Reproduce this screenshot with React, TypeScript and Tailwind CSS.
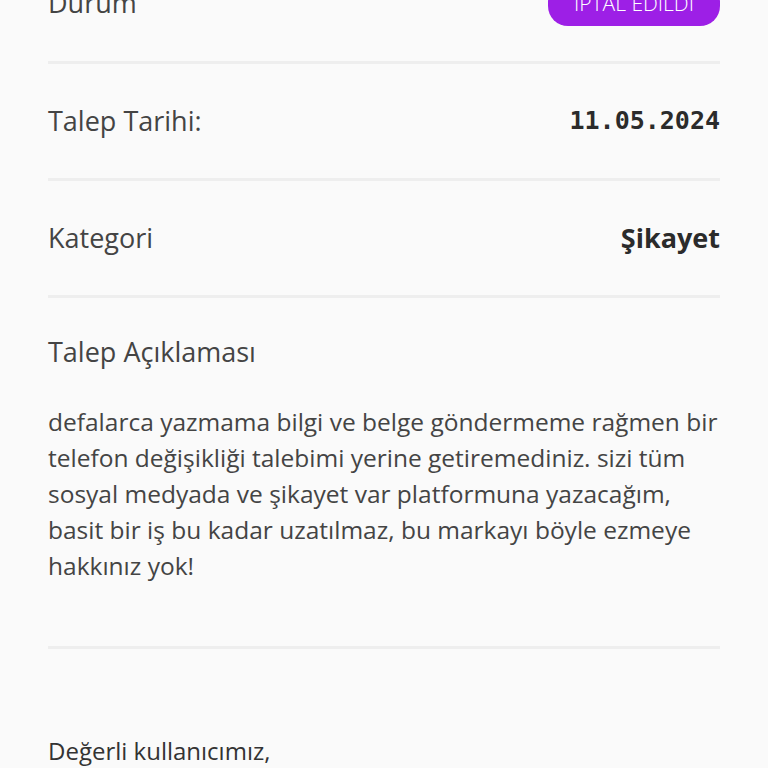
export default function App() {
    const aciklama =
        "defalarca yazmama bilgi ve belge göndermeme rağmen bir telefon değişikliği talebimi yerine getiremediniz. sizi tüm sosyal medyada ve şikayet var platformuna yazacağım, basit bir iş bu kadar uzatılmaz, bu markayı böyle ezmeye hakkınız yok!";

    return (
        <div
            className="h-[768px] overflow-hidden bg-[#fafafa] text-[#333333]"
            style={{ fontFamily: "'Open Sans', 'Noto Sans', sans-serif" }}
        >
            <div className="-mt-[54px] px-[48px]">
                {/* Durum */}
                <div className="flex items-center justify-between h-[115px]">
                    <span className="text-[27px] text-[#444444]">Durum</span>
                    <span className="flex items-center h-[44px] px-[26px] rounded-[20px] bg-[#9d1fe6] text-white text-[21px] font-light">
                        İPTAL EDİLDİ
                    </span>
                </div>
                <div className="h-[3px] bg-[#eeeeee]" />

                {/* Talep Tarihi */}
                <div className="flex items-center justify-between h-[114px]">
                    <span className="text-[27px] text-[#444444]">Talep Tarihi:</span>
                    <span
                        className="text-[25px] font-bold text-[#2b2b2b]"
                        style={{ fontFamily: "'DejaVu Sans Mono', monospace" }}
                    >
                        11.05.2024
                    </span>
                </div>
                <div className="h-[3px] bg-[#eeeeee]" />

                {/* Kategori */}
                <div className="flex items-center justify-between h-[114px]">
                    <span className="text-[27px] text-[#444444]">Kategori</span>
                    <span className="text-[27px] font-bold text-[#2b2b2b]">Şikayet</span>
                </div>
                <div className="h-[3px] bg-[#eeeeee]" />

                {/* Talep Açıklaması */}
                <div className="pt-[38px] pb-[62px]">
                    <div className="text-[27px] text-[#444444] leading-[32px]">Talep Açıklaması</div>
                    <p className="mt-[36px] text-[24.5px] leading-[36px] text-[#444444]">{aciklama}</p>
                </div>
                <div className="h-[3px] bg-[#eeeeee]" />

                <div className="pt-[84px] text-[24px] text-[#333333]">Değerli kullanıcımız,</div>
            </div>
        </div>
    );
}
